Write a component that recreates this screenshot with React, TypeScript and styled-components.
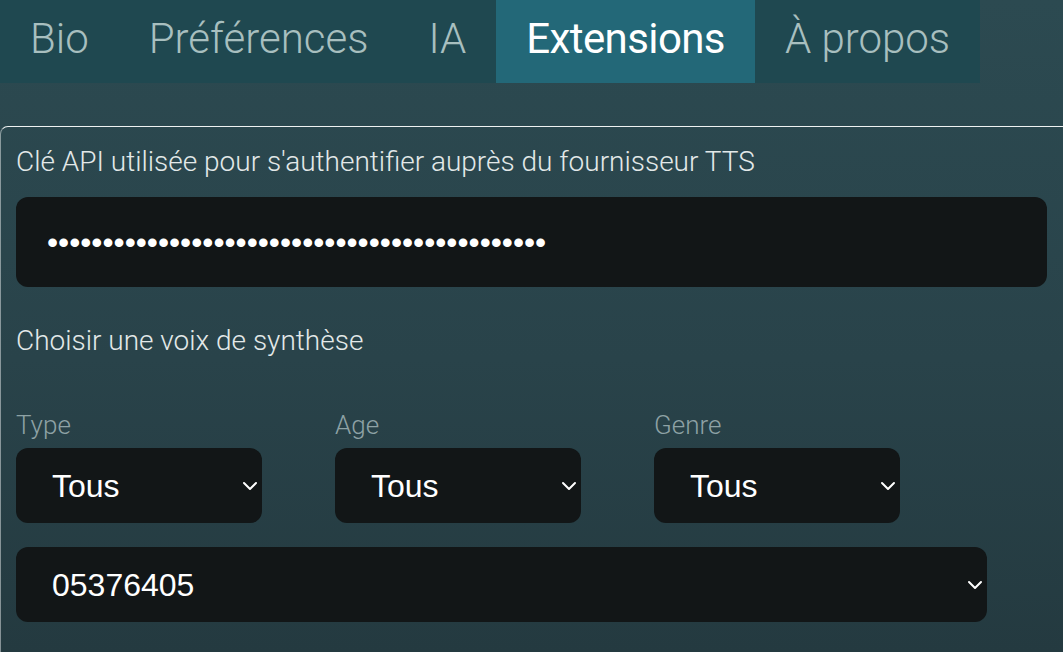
import React, { useState } from 'react';
import styled, { createGlobalStyle } from 'styled-components';
import { ChevronDown } from 'lucide-react';

const GlobalStyle = createGlobalStyle`
  html, body {
    margin: 0;
    padding: 0;
  }
  body {
    font-family: Roboto, "Liberation Sans", sans-serif;
    background: #263c42;
  }
  * {
    box-sizing: border-box;
  }
`;

// layout
const Page = styled.div`
  min-height: 100vh;
  overflow: hidden;
  background: linear-gradient(to bottom, #2c4a51 0%, #29434a 55%, #243a40 100%);
`;

const TabBar = styled.nav`
  display: inline-flex;
  height: 83px;
  background: #1f4850;
`;

const Tab = styled.button<{ $active?: boolean }>`
  display: flex;
  align-items: center;
  padding: 0 30px 6px;
  border: none;
  background: ${(p) => (p.$active ? '#236878' : 'transparent')};
  color: ${(p) => (p.$active ? '#ffffff' : '#a8bfbf')};
  font-family: Roboto, sans-serif;
  font-size: 42px;
  font-weight: ${(p) => (p.$active ? 400 : 300)};
  letter-spacing: ${(p) => (p.$active ? '-0.6px' : '0')};
  cursor: pointer;
`;

const Card = styled.section`
  margin-top: 43px;
  padding: 19px 16px 30px 15px;
  border-top: 1px solid #eef2f2;
  border-left: 1px solid rgba(255, 255, 255, 0.45);
  border-top-left-radius: 8px;
`;

const Label = styled.label`
  display: block;
  font-size: 28px;
  line-height: 32px;
  font-weight: 300;
  color: #e3e9e9;
`;

const SectionTitle = styled(Label)`
  margin-top: 38px;
`;

const KeyInput = styled.input`
  display: block;
  width: 100%;
  height: 90px;
  margin-top: 19px;
  padding: 0 31px;
  border: none;
  border-radius: 12px;
  background: #121617;
  color: #ffffff;
  font-family: "Liberation Sans", Arial, sans-serif;
  font-size: 31.7px;
  outline: none;
`;

const Filters = styled.div`
  display: grid;
  grid-template-columns: repeat(3, 246px);
  column-gap: 73px;
  margin-top: 54px;
`;

const Field = styled.div`
  display: flex;
  flex-direction: column;
  gap: 9px;
`;

const SmallLabel = styled.label`
  font-size: 26px;
  line-height: 28px;
  font-weight: 300;
  color: #8ea2a5;
`;

const SelectWrap = styled.div<{ $wide?: boolean }>`
  position: relative;
  width: ${(p) => (p.$wide ? '971px' : '100%')};
  margin-top: ${(p) => (p.$wide ? '24px' : '0')};
`;

const Select = styled.select`
  display: block;
  width: 100%;
  height: 75px;
  padding: 0 40px 0 36px;
  border: none;
  border-radius: 12px;
  appearance: none;
  background: #121617;
  color: #ffffff;
  font-family: "Liberation Sans", Arial, sans-serif;
  font-size: 32px;
  outline: none;
`;

const Chevron = styled(ChevronDown)`
  position: absolute;
  top: 50%;
  right: 0;
  transform: translateY(-50%);
  color: #ffffff;
  pointer-events: none;
`;

const tabs = ['Bio', 'Préférences', 'IA', 'Extensions', 'À propos'];

const filters = [
  { id: 'type', label: 'Type' },
  { id: 'age', label: 'Age' },
  { id: 'genre', label: 'Genre' },
];

function App() {
  const [active, setActive] = useState('Extensions');
  const [apiKey, setApiKey] = useState('x'.repeat(45));

  return (
    <Page>
      <GlobalStyle />
      <TabBar>
        {tabs.map((t) => (
          <Tab key={t} $active={t === active} onClick={() => setActive(t)}>
            {t}
          </Tab>
        ))}
      </TabBar>

      <Card>
        <Label htmlFor="tts-key">Clé API utilisée pour s'authentifier auprès du fournisseur TTS</Label>
        <KeyInput
          id="tts-key"
          type="password"
          value={apiKey}
          onChange={(e) => setApiKey(e.target.value)}
        />

        <SectionTitle>Choisir une voix de synthèse</SectionTitle>

        <Filters>
          {filters.map((f) => (
            <Field key={f.id}>
              <SmallLabel htmlFor={f.id}>{f.label}</SmallLabel>
              <SelectWrap>
                <Select id={f.id} defaultValue="all">
                  <option value="all">Tous</option>
                </Select>
                <Chevron size={24} strokeWidth={2} />
              </SelectWrap>
            </Field>
          ))}
        </Filters>

        <SelectWrap $wide>
          <Select defaultValue="05376405">
            <option value="05376405">05376405</option>
          </Select>
          <Chevron size={24} strokeWidth={2} />
        </SelectWrap>
      </Card>
    </Page>
  );
}

export default App;
